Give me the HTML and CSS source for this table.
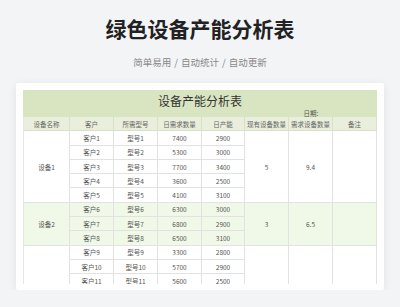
FILE: index.html
```html
<!DOCTYPE html>
<html lang="zh-CN">
<head>
<meta charset="utf-8">
<title>绿色设备产能分析表</title>
<link rel="stylesheet" href="styles.css">
</head>
<body>
<header class="top">
  <h1 class="title">绿色设备产能分析表</h1>
  <p class="sub">简单易用<span class="sep">/</span>自动统计<span class="sep">/</span>自动更新</p>
</header>
<main class="card">
  <div class="clip">
    <div class="band">
      <div class="band-title">设备产能分析表</div>
      <div class="band-date">日期:</div>
    </div>
    <div class="sheet">
      <div class="c h first">设备名称</div>
      <div class="c h">客户</div>
      <div class="c h">所需型号</div>
      <div class="c h">日需求数量</div>
      <div class="c h">日产能</div>
      <div class="c h">现有设备数量</div>
      <div class="c h">需求设备数量</div>
      <div class="c h">备注</div>

      <div class="c first span5">设备1</div>
      <div class="c">客户1</div><div class="c">型号1</div><div class="c">7400</div><div class="c">2900</div>
      <div class="c span5">5</div><div class="c span5">9.4</div><div class="c span5"></div>
      <div class="c">客户2</div><div class="c">型号2</div><div class="c">5300</div><div class="c">3000</div>
      <div class="c">客户3</div><div class="c">型号3</div><div class="c">7700</div><div class="c">3400</div>
      <div class="c">客户4</div><div class="c">型号4</div><div class="c">3600</div><div class="c">2500</div>
      <div class="c">客户5</div><div class="c">型号5</div><div class="c">4100</div><div class="c">3100</div>

      <div class="c g first span3">设备2</div>
      <div class="c g">客户6</div><div class="c g">型号6</div><div class="c g">6300</div><div class="c g">3000</div>
      <div class="c g span3">3</div><div class="c g span3">6.5</div><div class="c g span3"></div>
      <div class="c g">客户7</div><div class="c g">型号7</div><div class="c g">6800</div><div class="c g">2900</div>
      <div class="c g">客户8</div><div class="c g">型号8</div><div class="c g">6500</div><div class="c g">3100</div>

      <div class="c first span3"></div>
      <div class="c">客户9</div><div class="c">型号9</div><div class="c">3300</div><div class="c">2800</div>
      <div class="c span3"></div><div class="c span3"></div><div class="c span3"></div>
      <div class="c">客户10</div><div class="c">型号10</div><div class="c">5700</div><div class="c">2900</div>
      <div class="c">客户11</div><div class="c">型号11</div><div class="c">5600</div><div class="c">2500</div>
    </div>
  </div>
</main>
</body>
</html>
```
FILE: styles.css
```css
* { box-sizing: border-box; }
html, body { margin: 0; padding: 0; }
body {
  background: #f3f4f6;
  font-family: "Noto Sans CJK SC", "Noto Sans", sans-serif;
  color: #333;
  width: 400px;
}
.top {
  padding-top: 14px;
  text-align: center;
}
.title {
  margin: 0;
  font-size: 21px;
  line-height: 28px;
  font-weight: 700;
  color: #222;
}
.sub {
  margin: 13px 0 0;
  font-size: 9.5px;
  line-height: 14px;
  color: #888;
}
.sep { margin: 0 3px; }
.card {
  margin: 14px 16px 0;
  width: 368px;
  height: 207px;
  padding: 7px 7px 6px;
  background: #fff;
  border-radius: 2px;
  box-shadow: 0 2px 8px rgba(0, 0, 0, 0.08);
}
.clip {
  height: 194px;
  overflow: hidden;
}
.band, .sheet {
  display: grid;
  grid-template-columns: 47px 44px 44px 44px 43px 44px 44px 44px;
}
.band {
  background: #d9e5c1;
  grid-template-rows: 19px 8px;
}
.band-title {
  grid-column: 1 / -1;
  grid-row: 1;
  font-size: 12px;
  line-height: 19px;
  text-align: center;
  color: #333;
  padding-top: 1px;
}
.band-date {
  grid-column: 7 / 8;
  grid-row: 2;
  font-size: 6.5px;
  line-height: 8px;
  text-align: center;
  color: #555;
}
.sheet {
  grid-auto-rows: 14.3px;
}
.c {
  display: flex;
  align-items: center;
  justify-content: center;
  font-size: 6.5px;
  color: #555;
  border-right: 1px solid #e2e2e2;
  border-bottom: 1px solid #e2e2e2;
  background: #fff;
  white-space: nowrap;
}
.c.first { border-left: 1px solid #e6e6e6; }
.c.h {
  background: #e9efdc;
  color: #666;
  border-right-color: #d8dfca;
  border-bottom-color: #d8dfca;
}
.c.g { background: #f0f9e7; }
.span5 { grid-row: span 5; }
.span3 { grid-row: span 3; }
```
